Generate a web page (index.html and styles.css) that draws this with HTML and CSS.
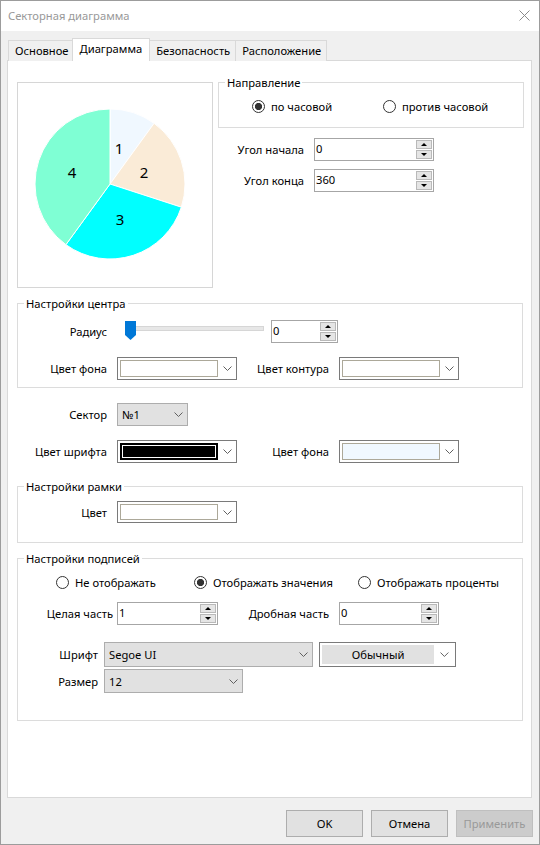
FILE: index.html
```html
<!DOCTYPE html>
<html>
	<head>
		<meta charset="utf-8" />
		<title>Секторная диаграмма</title>
		<link rel="stylesheet" href="styles.css">
	</head>
	<body>
		<div class="window">
			<div class="titlebar">
				<span class="title">Секторная диаграмма</span>
				<svg class="close" width="11" height="11" viewBox="0 0 11 11">
					<path d="M0.5 0.5 L10.5 10.5 M10.5 0.5 L0.5 10.5" stroke="#8a8a8a" stroke-width="1" fill="none" />
				</svg>
			</div>

			<div class="tabs">
				<div class="tab">Основное</div>
				<div class="tab active">Диаграмма</div>
				<div class="tab">Безопасность</div>
				<div class="tab">Расположение</div>
			</div>

			<div class="page">
				<div class="top">
					<div class="pie-box">
						<svg width="194" height="204" viewBox="0 0 194 204">
							<g stroke="#fff" stroke-width="1">
								<path d="M92 101 L92 26 A75 75 0 0 1 136.08 40.32 Z" fill="#f0f8ff" />
								<path d="M92 101 L136.08 40.32 A75 75 0 0 1 163.33 124.18 Z" fill="#faebd7" />
								<path d="M92 101 L163.33 124.18 A75 75 0 0 1 47.92 161.68 Z" fill="#00ffff" />
								<path d="M92 101 L47.92 161.68 A75 75 0 0 1 92 26 Z" fill="#7fffd4" />
							</g>
							<g class="pie-labels">
								<text x="101" y="65">1</text>
								<text x="126" y="89">2</text>
								<text x="102" y="136">3</text>
								<text x="54" y="89">4</text>
							</g>
						</svg>
					</div>

					<div class="top-right">
						<fieldset class="group dir">
							<legend>Направление</legend>
							<div class="radios dir-radios">
								<div class="radio checked w1"><i></i>по часовой</div>
								<div class="radio"><i></i>против часовой</div>
							</div>
						</fieldset>

						<div class="row angle first">
							<span class="lbl">Угол начала</span>
							<div class="spin w120"><span class="val">0</span><div class="btns"><i class="up"></i><i class="dn"></i></div></div>
						</div>
						<div class="row angle">
							<span class="lbl">Угол конца</span>
							<div class="spin w120"><span class="val">360</span><div class="btns"><i class="up"></i><i class="dn"></i></div></div>
						</div>
					</div>
				</div>

				<fieldset class="group center">
					<legend>Настройки центра</legend>
					<div class="row radius">
						<span class="lbl">Радиус</span>
						<svg class="slider" width="139" height="23" viewBox="0 0 139 23">
							<rect x="5.5" y="6.5" width="133" height="4" fill="#e7e7e7" stroke="#d6d6d6" />
							<polygon points="0,1 11,1 11,15 5.5,20 0,15" fill="#0078d7" />
						</svg>
						<div class="spin w67"><span class="val">0</span><div class="btns"><i class="up"></i><i class="dn"></i></div></div>
					</div>
					<div class="row colors">
						<span class="lbl">Цвет фона</span>
						<div class="combo color"><span class="swatch"></span><svg class="chev" width="9" height="5" viewBox="0 0 9 5"><path d="M0.5 0.5 L4.5 4.5 L8.5 0.5" /></svg></div>
						<span class="lbl lbl2">Цвет контура</span>
						<div class="combo color"><span class="swatch"></span><svg class="chev" width="9" height="5" viewBox="0 0 9 5"><path d="M0.5 0.5 L4.5 4.5 L8.5 0.5" /></svg></div>
					</div>
				</fieldset>

				<div class="row plain sector">
					<span class="lbl">Сектор</span>
					<div class="combo grey w71"><span class="text">№1</span><svg class="chev" width="9" height="5" viewBox="0 0 9 5"><path d="M0.5 0.5 L4.5 4.5 L8.5 0.5" /></svg></div>
				</div>
				<div class="row plain colors fontcolor">
					<span class="lbl">Цвет шрифта</span>
					<div class="combo color"><span class="swatch black"></span><svg class="chev" width="9" height="5" viewBox="0 0 9 5"><path d="M0.5 0.5 L4.5 4.5 L8.5 0.5" /></svg></div>
					<span class="lbl lbl2">Цвет фона</span>
					<div class="combo color"><span class="swatch alice"></span><svg class="chev" width="9" height="5" viewBox="0 0 9 5"><path d="M0.5 0.5 L4.5 4.5 L8.5 0.5" /></svg></div>
				</div>

				<fieldset class="group frame">
					<legend>Настройки рамки</legend>
					<div class="row frame-row">
						<span class="lbl">Цвет</span>
						<div class="combo color h22"><span class="swatch"></span><svg class="chev" width="9" height="5" viewBox="0 0 9 5"><path d="M0.5 0.5 L4.5 4.5 L8.5 0.5" /></svg></div>
					</div>
				</fieldset>

				<fieldset class="group captions">
					<legend>Настройки подписей</legend>
					<div class="radios cap-radios">
						<div class="radio w138"><i></i>Не отображать</div>
						<div class="radio checked w164"><i></i>Отображать значения</div>
						<div class="radio"><i></i>Отображать проценты</div>
					</div>
					<div class="row digits">
						<span class="lbl">Целая часть</span>
						<div class="spin w101"><span class="val">1</span><div class="btns"><i class="up"></i><i class="dn"></i></div></div>
						<span class="lbl lbl2">Дробная часть</span>
						<div class="spin w100"><span class="val">0</span><div class="btns"><i class="up"></i><i class="dn"></i></div></div>
					</div>
					<div class="row font-row">
						<span class="lbl">Шрифт</span>
						<div class="combo grey w209"><span class="text">Segoe UI</span><svg class="chev" width="9" height="5" viewBox="0 0 9 5"><path d="M0.5 0.5 L4.5 4.5 L8.5 0.5" /></svg></div>
						<div class="combo style"><span class="style-val">Обычный</span><svg class="chev" width="9" height="5" viewBox="0 0 9 5"><path d="M0.5 0.5 L4.5 4.5 L8.5 0.5" /></svg></div>
					</div>
					<div class="row size-row">
						<span class="lbl">Размер</span>
						<div class="combo grey w139"><span class="text">12</span><svg class="chev" width="9" height="5" viewBox="0 0 9 5"><path d="M0.5 0.5 L4.5 4.5 L8.5 0.5" /></svg></div>
					</div>
				</fieldset>
			</div>

			<div class="buttons">
				<div class="btn">OK</div>
				<div class="btn">Отмена</div>
				<div class="btn disabled">Применить</div>
			</div>
		</div>
	</body>
</html>
```

FILE: styles.css
```css
*{
	box-sizing: border-box;
}
body{
	margin: 0;
	font: 11.2px "Noto Sans", "Open Sans", sans-serif;
	color: #000;
}
.window{
	width: 540px;
	height: 845px;
	border: 1px solid #9c9c9c;
	background: #f0f0f0;
	display: flex;
	flex-direction: column;
}

/* title bar */
.titlebar{
	height: 30px;
	background: #fff;
	display: flex;
	align-items: center;
	justify-content: space-between;
	padding: 0 9px 1px 7px;
	color: #999;
}
.close{
	display: block;
}

/* tabs */
.tabs{
	display: flex;
	align-items: flex-end;
	height: 23px;
	margin: 7px 0 0 7px;
	position: relative;
	z-index: 2;
}
.tab{
	height: 21px;
	line-height: 19px;
	padding: 0 5px 0 6px;
	border: 1px solid #d9d9d9;
	border-bottom: 0;
	margin-right: -1px;
	background: #f0f0f0;
}
.tab.active{
	height: 23px;
	line-height: 20px;
	padding: 0 7px;
	background: #fff;
	margin: 0 -1px 0 -2px;
	position: relative;
	z-index: 3;
}

/* tab page */
.page{
	width: 525px;
	height: 738px;
	margin: -1px 0 0 6px;
	border: 1px solid #d9d9d9;
	background: #fff;
	position: relative;
	z-index: 1;
}
.top{
	display: flex;
	align-items: flex-start;
	padding-left: 9px;
}
.pie-box{
	width: 196px;
	height: 206px;
	margin-top: 21px;
	border: 1px solid #d6d6d6;
}
.pie-box svg{
	display: block;
}
.pie-labels text{
	font: 15px "Noto Sans", sans-serif;
	text-anchor: middle;
	dominant-baseline: central;
	fill: #000;
}
.top-right{
	width: 306px;
	margin: 14px 0 0 5px;
}

/* group boxes */
.group{
	margin: 0;
	padding: 0;
	min-width: 0;
	border: 1px solid #dcdcdc;
}
.group legend{
	margin-left: 6px;
	padding: 0 2px;
	line-height: 15px;
}
.dir{
	padding-bottom: 13px;
}
.center{
	width: 506px;
	margin: 8px 0 0 9px;
	padding-bottom: 7px;
}
.frame{
	width: 506px;
	margin: 16px 0 0 9px;
	padding-bottom: 19px;
}
.captions{
	width: 506px;
	margin: 8px 0 0 9px;
	padding-bottom: 27px;
}

/* radio buttons */
.radios{
	display: flex;
	height: 16px;
	align-items: center;
	margin-top: 8px;
}
.dir-radios{
	padding-left: 33px;
}
.cap-radios{
	padding-left: 38px;
}
.radio{
	display: flex;
	align-items: center;
	white-space: nowrap;
}
.radio i{
	width: 13px;
	height: 13px;
	border: 1px solid #333;
	border-radius: 50%;
	background: #fff;
	margin-right: 6px;
	flex: none;
}
.radio.checked i{
	background: radial-gradient(circle, #333 0 3.3px, #fff 3.9px);
}
.w1{ width: 131px; }
.w138{ width: 138px; }
.w164{ width: 164px; }

/* form rows */
.row{
	display: flex;
	align-items: center;
	height: 23px;
}
.lbl{
	text-align: right;
	white-space: nowrap;
	flex: none;
}
.angle .lbl{
	width: 86px;
	margin-right: 10px;
}
.angle.first{
	margin-top: 10px;
}
.angle + .angle{
	margin-top: 8px;
}
.radius{
	margin-top: 9px;
}
.radius .lbl,
.colors .lbl,
.sector .lbl,
.frame-row .lbl{
	width: 89px;
	margin-right: 10px;
}
.radius .lbl{
	margin-right: 18px;
}
.slider{
	display: block;
	margin-right: 7px;
}
.colors{
	margin-top: 14px;
}
.colors .lbl2{
	width: 72px;
	margin-left: 20px;
}
.plain{
	margin-left: 10px;
}
.sector{
	margin-top: 15px;
}
.frame-row{
	margin-top: 7px;
	height: 22px;
}
.digits{
	margin-top: 12px;
}
.digits .lbl{
	width: 95px;
	margin-right: 4px;
}
.digits .lbl2{
	width: 111px;
	margin-right: 10px;
}
.font-row{
	margin-top: 17px;
	height: 25px;
}
.size-row{
	margin-top: 2px;
	height: 24px;
}
.font-row .lbl,
.size-row .lbl{
	width: 80px;
	margin-right: 6px;
}

/* numeric up-down */
.spin{
	display: flex;
	height: 23px;
	border: 1px solid #a6a6a6;
	background: #fff;
	flex: none;
}
.spin .val{
	flex: 1;
	padding-left: 1px;
	line-height: 19px;
}
.spin .btns{
	width: 17px;
	display: flex;
	flex-direction: column;
	padding: 1px 1px 1px 0;
	gap: 1px;
}
.spin .btns i{
	flex: 1;
	background: #e5e5e5;
	border: 1px solid #b9b9b9;
	display: flex;
	align-items: center;
	justify-content: center;
}
.spin .btns i:before{
	content: "";
	border-left: 3px solid transparent;
	border-right: 3px solid transparent;
}
.spin .btns .up:before{
	border-bottom: 3px solid #000;
}
.spin .btns .dn:before{
	border-top: 3px solid #000;
}
.w120{ width: 120px; }
.w67{ width: 67px; }
.w101{ width: 101px; }
.w100{ width: 100px; }

/* combo boxes */
.combo{
	display: flex;
	align-items: center;
	height: 23px;
	flex: none;
}
.chev{
	display: block;
	fill: none;
	stroke: #606060;
	stroke-width: 1;
}
.combo.color{
	width: 120px;
	padding: 2px;
	border: 1px solid #7a7a7a;
	background: #fff;
}
.combo.color.h22{
	height: 22px;
}
.swatch{
	width: 98px;
	height: 100%;
	border: 1px solid #aca899;
	background: #fff;
	margin-right: 5px;
}
.swatch.black{
	background: #000;
	border-color: #000;
	box-shadow: inset 0 0 0 1px #000, inset 0 0 0 2px #fff;
}
.swatch.alice{
	background: #f0f8ff;
}
.combo.grey{
	border: 1px solid #adadad;
	background: #e1e1e1;
	padding: 0 4px 0 4px;
	justify-content: space-between;
}
.w71{ width: 71px; }
.w209{ width: 209px; height: 25px; margin-right: 6px; }
.w139{ width: 139px; height: 24px; }
.combo.style{
	width: 137px;
	height: 25px;
	border: 1px solid #7a7a7a;
	background: #fff;
	padding: 2px 6px 2px 2px;
}
.style-val{
	width: 114px;
	height: 100%;
	background: #e1e1e1;
	text-align: center;
	line-height: 19px;
	margin-right: 6px;
}

/* dialog buttons */
.buttons{
	display: flex;
	justify-content: flex-end;
	gap: 8px;
	margin-top: 12px;
	padding-right: 6px;
}
.btn{
	width: 77px;
	height: 27px;
	line-height: 25px;
	text-align: center;
	border: 1px solid #adadad;
	background: #e1e1e1;
}
.btn.disabled{
	background: #cccccc;
	border-color: #bfbfbf;
	color: #999;
}
```
